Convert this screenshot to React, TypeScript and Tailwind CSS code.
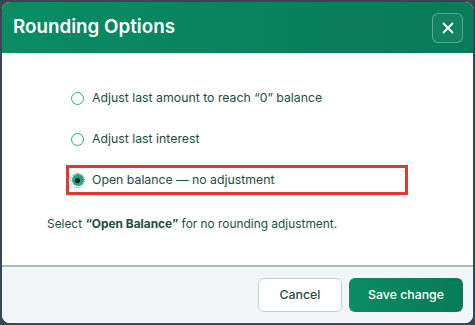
import React, { useState } from 'react';

const options = [
  { id: 'last-amount', label: 'Adjust last amount to reach \u201c0\u201d balance' },
  { id: 'last-interest', label: 'Adjust last interest' },
  { id: 'open', label: 'Open balance \u2014 no adjustment' },
];

export default function App() {
  const [selected, setSelected] = useState('open');

  return (
    <div
      className="w-[475px] h-[325px] bg-[#3b4654] p-[2px] overflow-hidden"
      style={{ fontFamily: 'Inter, "Noto Sans", sans-serif' }}
    >
      <div className="h-full flex flex-col rounded-lg overflow-hidden bg-white">
        {/* Header */}
        <div className="h-[51px] shrink-0 flex items-center justify-between pl-[11px] pr-[10px] bg-gradient-to-r from-[#0b8c63] to-[#077a57]">
          <h2 className="text-[18.8px] font-semibold text-white">Rounding Options</h2>
          <button className="w-[31px] h-[30px] flex items-center justify-center rounded-md border border-white/30 bg-white/5 text-white">
            <svg width="14" height="14" viewBox="0 0 14 14" fill="none" stroke="currentColor" strokeWidth="1.8" strokeLinecap="round">
              <path d="M2.5 2.5l9 9M11.5 2.5l-9 9" />
            </svg>
          </button>
        </div>

        {/* Body */}
        <div className="flex-1 pt-[30px] pl-[48px] pr-4">
          <div className="flex flex-col gap-[11px] ml-[16px]">
            {options.map((o) => {
              const active = selected === o.id;
              return (
                <label
                  key={o.id}
                  onClick={() => setSelected(o.id)}
                  className={
                    'flex items-center gap-[8px] h-[30px] w-[342px] pl-[2px] border-[3px] cursor-pointer ' +
                    (active ? 'border-[#e03a30]' : 'border-transparent')
                  }
                >
                  {active ? (
                    <span className="w-[15px] h-[15px] -ml-[1px] -mr-[1px] rounded-full border border-dotted border-[#3aa88a] flex items-center justify-center">
                      <span className="w-[12px] h-[12px] rounded-full bg-[#27a07f] flex items-center justify-center">
                        <span className="w-[5px] h-[5px] rounded-full bg-[#0d1a17]" />
                      </span>
                    </span>
                  ) : (
                    <span className="w-[13px] h-[13px] rounded-full border-[1.5px] border-[#3aa88a] bg-white" />
                  )}
                  <span className="text-[12.3px] text-[#1e4d40]">{o.label}</span>
                </label>
              );
            })}
          </div>
          <p className="mt-[21px] -ml-[3px] leading-[16px] text-[11.9px] text-[#1e4d40]">
            Select <span className="font-bold">&ldquo;Open Balance&rdquo;</span> for no rounding adjustment.
          </p>
        </div>

        {/* Footer */}
        <div className="h-[58px] shrink-0 border-t-2 border-[#a8bdb6] bg-[#f3f6f8] flex items-center justify-end gap-[7px] pr-[10px]">
          <button className="w-[84px] h-[34px] rounded-md border border-[#b9d3cb] bg-white text-[12.3px] font-medium text-[#1e4d40]">
            Cancel
          </button>
          <button className="w-[114px] h-[34px] rounded-md bg-gradient-to-r from-[#0b8c63] to-[#077a57] text-[12.3px] font-medium text-white">
            Save change
          </button>
        </div>
      </div>
    </div>
  );
}
